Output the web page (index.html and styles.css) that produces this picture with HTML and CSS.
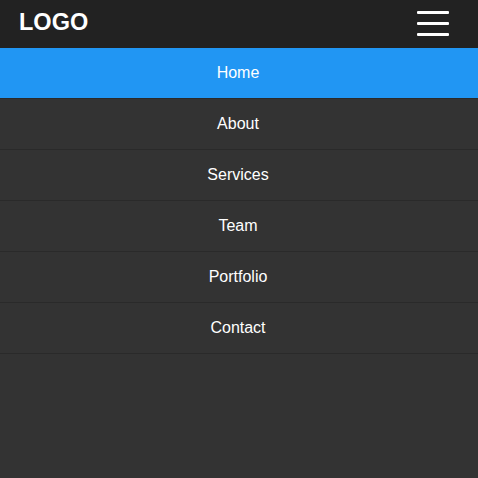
FILE: index.html
```html
<!DOCTYPE html>
<html>
<head>
<meta charset="utf-8">
<link rel="stylesheet" href="styles.css">
</head>
<body>
<header class="topbar">
  <div class="logo">LOGO</div>
  <button class="burger" aria-label="Menu">
    <span class="bar"></span>
    <span class="bar"></span>
    <span class="bar"></span>
  </button>
</header>
<nav class="menu">
  <a class="item active" href="#">Home</a>
  <a class="item" href="#">About</a>
  <a class="item" href="#">Services</a>
  <a class="item" href="#">Team</a>
  <a class="item" href="#">Portfolio</a>
  <a class="item" href="#">Contact</a>
</nav>
</body>
</html>
```
FILE: styles.css
```css
html, body {
  margin: 0;
  padding: 0;
  height: 100%;
}
body {
  background: #333333;
  font-family: "Liberation Sans", Arial, sans-serif;
  color: #ffffff;
}
.topbar {
  height: 48px;
  background: #222222;
  display: flex;
  align-items: center;
  justify-content: space-between;
  padding: 0 29px 0 19px;
}
.logo {
  font-size: 23.5px;
  font-weight: bold;
  line-height: 1;
  margin-top: -2px;
}
.burger {
  background: none;
  border: 0;
  padding: 0;
  width: 32px;
  display: flex;
  flex-direction: column;
  gap: 8px;
  margin-top: -2px;
}
.bar {
  display: block;
  height: 3px;
  width: 32px;
  background: #ffffff;
  border-radius: 1px;
}
.menu {
  display: flex;
  flex-direction: column;
}
.item {
  height: 50px;
  border-bottom: 1px solid #2a2a2a;
  display: flex;
  align-items: center;
  justify-content: center;
  padding-right: 2px;
  color: #ffffff;
  text-decoration: none;
  font-size: 16px;
}
.item.active {
  background: #2196f3;
}
```
